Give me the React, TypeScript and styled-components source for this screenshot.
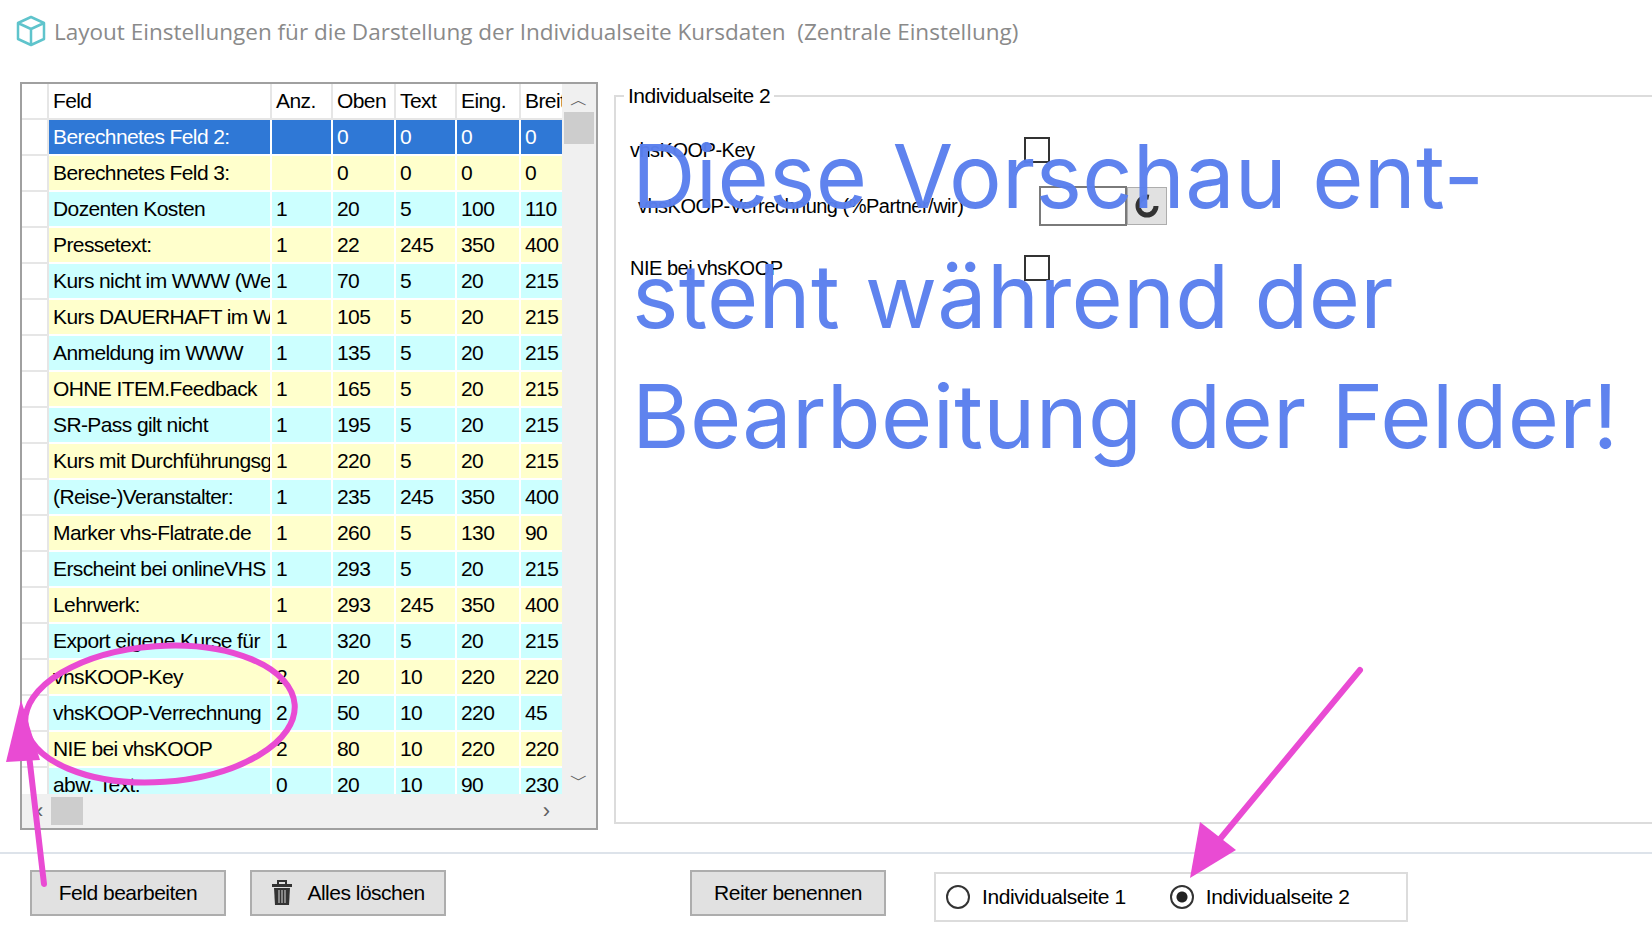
import styled, { createGlobalStyle } from "styled-components";

const Global = createGlobalStyle`
  html, body { margin: 0; background: #fff; }
  body { font-family: "Liberation Sans", Arial, sans-serif; width: 1652px; height: 938px; overflow: hidden; position: relative; }
`;

const Title = styled.div`
  height: 64px;
  display: flex;
  align-items: center;
  gap: 6px;
  padding-left: 14px;
  font-family: "Open Sans", "Noto Sans", sans-serif;
  font-size: 22.5px;
  color: #8a8a8a;
  box-sizing: border-box;
  padding-bottom: 2px;
`;

const Main = styled.div`
  display: flex;
  height: 768px;
  padding: 18px 0 0 20px;
  box-sizing: border-box;
  gap: 16px;
`;

const Grid = styled.div`
  width: 578px;
  height: 748px;
  border: 2px solid #a0a0a0;
  box-sizing: border-box;
  display: grid;
  grid-template-columns: 1fr 34px;
  grid-template-rows: 1fr 34px;
  background: #fff;
`;

const Table = styled.div`
  overflow: hidden;
  font-size: 21px;
  letter-spacing: -0.6px;
`;

const Row = styled.div`
  display: grid;
  grid-template-columns: 27px 223px 61px 63px 61px 64px 43px;
  height: 36px;
`;

const Cell = styled.div<{ $bg: string; $fg?: string }>`
  background: ${(p) => p.$bg};
  color: ${(p) => p.$fg || "#000"};
  border-right: 2px solid #fff;
  border-bottom: 2px solid #fff;
  padding-left: 4px;
  display: flex;
  align-items: center;
  white-space: nowrap;
  overflow: hidden;
`;

const HeadCell = styled.div`
  border-right: 2px solid #e6e6e6;
  border-bottom: 2px solid #e6e6e6;
  padding-left: 4px;
  display: flex;
  align-items: center;
  white-space: nowrap;
  overflow: hidden;
`;

const RowHead = styled.div`
  border-bottom: 2px solid #e6e6e6;
  border-right: 2px solid #e6e6e6;
  background: #fff;
`;

const VScroll = styled.div`
  background: #f0f0f0;
  display: flex;
  flex-direction: column;
  align-items: center;
  color: #606060;
  font-size: 18px;
`;

const Thumb = styled.div<{ $w: number; $h: number }>`
  width: ${(p) => p.$w}px;
  height: ${(p) => p.$h}px;
  background: #cdcdcd;
`;

const HScroll = styled.div`
  background: #f0f0f0;
  display: flex;
  align-items: center;
  gap: 8px;
  padding: 0 12px 0 14px;
  color: #606060;
  font-size: 22px;
`;

const Group = styled.fieldset`
  flex: 1;
  margin: 0;
  height: 740px;
  border: 2px solid #dcdcdc;
  border-right: none;
  padding: 0;
  position: relative;
  box-sizing: border-box;
  margin-top: 2px;
`;

const Legend = styled.legend`
  font-size: 21px;
  letter-spacing: -0.5px;
  padding: 0 4px;
  margin-left: 8px;
`;

const FieldRow = styled.div<{ $top: number }>`
  display: flex;
  align-items: center;
  font-size: 20px;
  letter-spacing: -0.5px;
  height: 44px;
  margin-top: ${(p) => p.$top}px;
  padding-left: 14px;
`;

const Label = styled.span<{ $w: number }>`
  width: ${(p) => p.$w}px;
`;

const Check = styled.div`
  width: 22px;
  height: 22px;
  border: 2px solid #333;
  background: #fff;
`;

const TextBox = styled.div`
  width: 88px;
  height: 40px;
  border: 2px solid #7a7a7a;
  box-sizing: border-box;
`;

const SpinBtn = styled.div`
  width: 38px;
  height: 36px;
  background: #e1e1e1;
  border: 1px solid #adadad;
  display: flex;
  align-items: center;
  justify-content: center;
`;

const Overlay = styled.div`
  position: absolute;
  left: 16px;
  top: 8px;
  font-family: Inter, "Noto Sans", sans-serif;
  font-size: 88px;
  letter-spacing: 0.3px;
  line-height: 120px;
  color: #5a80ee;
  pointer-events: none;
  opacity: 0.97;
`;

const Bottom = styled.div`
  border-top: 2px solid #dde3ea;
  margin-top: 20px;
  height: 80px;
  display: flex;
  align-items: center;
  padding-left: 30px;
  box-sizing: border-box;
`;

const Button = styled.div<{ $ml: number }>`
  margin-left: ${(p) => p.$ml}px;
  width: 196px;
  height: 46px;
  box-sizing: border-box;
  border: 2px solid #adadad;
  background: #e1e1e1;
  display: flex;
  align-items: center;
  justify-content: center;
  gap: 14px;
  font-size: 21px;
  letter-spacing: -0.5px;
`;

const RadioBox = styled.div`
  margin-left: 48px;
  width: 474px;
  height: 50px;
  margin-top: 8px;
  border: 2px solid #dcdcdc;
  box-sizing: border-box;
  display: flex;
  align-items: center;
  padding-left: 10px;
  font-size: 21px;
  letter-spacing: -0.4px;
`;

const Radio = styled.div<{ $on?: boolean; $ml: number }>`
  margin-left: ${(p) => p.$ml}px;
  display: flex;
  align-items: center;
  gap: 12px;
  &::before {
    content: "";
    width: 24px;
    height: 24px;
    border-radius: 50%;
    border: 2px solid #333;
    box-sizing: border-box;
    background: ${(p) => (p.$on ? "radial-gradient(circle, #222 0 5px, #fff 6px)" : "#fff")};
  }
`;

const Annot = styled.svg`
  position: absolute;
  left: 0;
  top: 0;
  pointer-events: none;
`;

const rows: string[][] = [
  ["Berechnetes Feld 2:", "", "0", "0", "0", "0"],
  ["Berechnetes Feld 3:", "", "0", "0", "0", "0"],
  ["Dozenten Kosten", "1", "20", "5", "100", "110"],
  ["Pressetext:", "1", "22", "245", "350", "400"],
  ["Kurs nicht im WWW (Web)", "1", "70", "5", "20", "215"],
  ["Kurs DAUERHAFT im WWW", "1", "105", "5", "20", "215"],
  ["Anmeldung im WWW", "1", "135", "5", "20", "215"],
  ["OHNE ITEM.Feedback", "1", "165", "5", "20", "215"],
  ["SR-Pass gilt nicht", "1", "195", "5", "20", "215"],
  ["Kurs mit Durchführungsgarantie", "1", "220", "5", "20", "215"],
  ["(Reise-)Veranstalter:", "1", "235", "245", "350", "400"],
  ["Marker vhs-Flatrate.de", "1", "260", "5", "130", "90"],
  ["Erscheint bei onlineVHS", "1", "293", "5", "20", "215"],
  ["Lehrwerk:", "1", "293", "245", "350", "400"],
  ["Export eigene Kurse für", "1", "320", "5", "20", "215"],
  ["vhsKOOP-Key", "2", "20", "10", "220", "220"],
  ["vhsKOOP-Verrechnung", "2", "50", "10", "220", "45"],
  ["NIE bei vhsKOOP", "2", "80", "10", "220", "220"],
  ["abw. Text:", "0", "20", "10", "90", "230"],
];

export default function App() {
  return (
    <>
      <Global />
      <Title>
        <svg width="34" height="34" viewBox="0 0 34 34">
          <path d="M17 3 L30 9 L30 25 L17 31 L4 25 L4 9 Z M4 9 L17 15 L30 9 M17 15 L17 31" fill="none" stroke="#5fc4cc" strokeWidth="2.5" strokeLinejoin="round" />
        </svg>
        Layout Einstellungen für die Darstellung der Individualseite Kursdaten&nbsp; (Zentrale Einstellung)
      </Title>
      <Main>
        <Grid>
          <Table>
            <Row>
              <RowHead />
              {["Feld", "Anz.", "Oben", "Text", "Eing.", "Breite"].map((h) => (
                <HeadCell key={h}>{h}</HeadCell>
              ))}
            </Row>
            {rows.map((r, i) => {
              const sel = i === 0;
              const bg = sel ? "#2f78d6" : i % 2 === 1 ? "#ffffcc" : "#ccffff";
              return (
                <Row key={i}>
                  <RowHead />
                  {r.map((c, j) => (
                    <Cell key={j} $bg={bg} $fg={sel ? "#fff" : undefined}>
                      {c}
                    </Cell>
                  ))}
                </Row>
              );
            })}
          </Table>
          <VScroll>
            <span style={{ marginTop: 4 }}>︿</span>
            <Thumb $w={30} $h={32} />
            <span style={{ marginTop: "auto", marginBottom: 2 }}>﹀</span>
          </VScroll>
          <HScroll>
            ‹<Thumb $w={32} $h={28} />
            <span style={{ marginLeft: "auto" }}>›</span>
          </HScroll>
          <VScroll />
        </Grid>
        <Group>
          <Legend>Individualseite 2</Legend>
          <FieldRow $top={20}>
            <Label $w={394}>vhsKOOP-Key</Label>
            <Check />
          </FieldRow>
          <FieldRow $top={12}>
            <Label $w={401} style={{ paddingLeft: 8 }}>vhsKOOP-Verrechnung (%Partner/wir)</Label>
            <TextBox />
            <SpinBtn>
              <svg width="26" height="26" viewBox="0 0 26 26">
                <circle cx="13" cy="13" r="9" fill="none" stroke="#333" strokeWidth="5" strokeDasharray="44 14" />
              </svg>
            </SpinBtn>
          </FieldRow>
          <FieldRow $top={18}>
            <Label $w={394}>NIE bei vhsKOOP</Label>
            <Check />
          </FieldRow>
          <Overlay>
            Diese Vorschau ent-
            <br />
            steht während der
            <br />
            Bearbeitung der Felder!
          </Overlay>
        </Group>
      </Main>
      <Bottom>
        <Button $ml={0}>Feld bearbeiten</Button>
        <Button $ml={24}>
          <svg width="22" height="26" viewBox="0 0 22 26">
            <rect x="1" y="4" width="20" height="3" fill="#333" />
            <rect x="7" y="1" width="8" height="4" fill="none" stroke="#333" strokeWidth="2" />
            <path d="M3 8 H19 L18 25 H4 Z" fill="#333" />
            <path d="M8 10 V23 M11 10 V23 M14 10 V23" stroke="#aaa" strokeWidth="1.4" />
          </svg>
          Alles löschen
        </Button>
        <Button $ml={244}>Reiter benennen</Button>
        <RadioBox>
          <Radio $ml={0}>Individualseite 1</Radio>
          <Radio $ml={44} $on>
            Individualseite 2
          </Radio>
        </RadioBox>
      </Bottom>
      <Annot width="1652" height="938">
        <g fill="none" stroke="#e94bd3" strokeWidth="6" strokeLinecap="round">
          <ellipse cx="160" cy="714" rx="135" ry="68" transform="rotate(-4 160 714)" />
          <path d="M44 884 L24 712" />
          <path d="M1360 670 L1196 868" />
        </g>
        <g fill="#e94bd3">
          <path d="M21 700 L6 762 L40 760 Z" />
          <path d="M1190 878 L1200 822 L1236 850 Z" />
        </g>
      </Annot>
    </>
  );
}
